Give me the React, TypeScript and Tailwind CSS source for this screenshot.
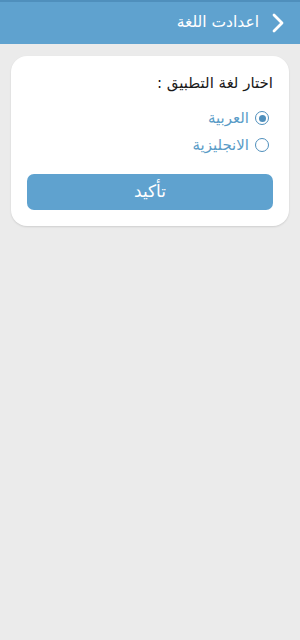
import { useState } from 'react';

const LANGS = [
  { id: 'ar', label: 'العربية' },
  { id: 'en', label: 'الانجليزية' },
];

export default function App() {
  const [lang, setLang] = useState('ar');

  return (
    <div dir="rtl" className="min-h-[640px] w-[300px] bg-[#ebebeb]" style={{ fontFamily: '"DejaVu Sans", sans-serif' }}>
      {/* Header */}
      <div className="h-[44px] bg-[#5fa2cf] border-t-2 border-[#4f8fbc] flex items-center pr-[16px] gap-[13px] text-white">
        <svg width="12" height="20" viewBox="0 0 12 20" fill="none" stroke="currentColor" strokeWidth="2.8" strokeLinecap="round" strokeLinejoin="round">
          <polyline points="2,2 10,10 2,18" />
        </svg>
        <h1 className="text-[15.5px] leading-none">اعدادت اللغة</h1>
      </div>

      {/* Card */}
      <div className="mx-[11px] mt-[12px] bg-white rounded-[16px] shadow-[0_1px_2px_rgba(0,0,0,0.12)] px-[16px] pt-[20px] pb-[16px]">
        <p className="text-[15px] text-[#1a1a1a] leading-none">اختار لغة التطبيق :</p>

        <div className="mt-[18px] flex flex-col gap-[9px] pr-[4px]">
          {LANGS.map((l) => (
            <button key={l.id} onClick={() => setLang(l.id)} className="flex items-center gap-[6px] text-[#5a9cc7] text-[15px] leading-[18px]">
              <span className="h-[14px] w-[14px] rounded-full border-[1.5px] border-[#4f8fbc] flex items-center justify-center">
                {lang === l.id && <span className="h-[7px] w-[7px] rounded-full bg-[#4f8fbc]" />}
              </span>
              <span>{l.label}</span>
            </button>
          ))}
        </div>

        <button className="mt-[20px] w-full h-[36px] rounded-[7px] bg-[#5fa2cf] text-white text-[17px]">
          تأكيد
        </button>
      </div>
    </div>
  );
}
